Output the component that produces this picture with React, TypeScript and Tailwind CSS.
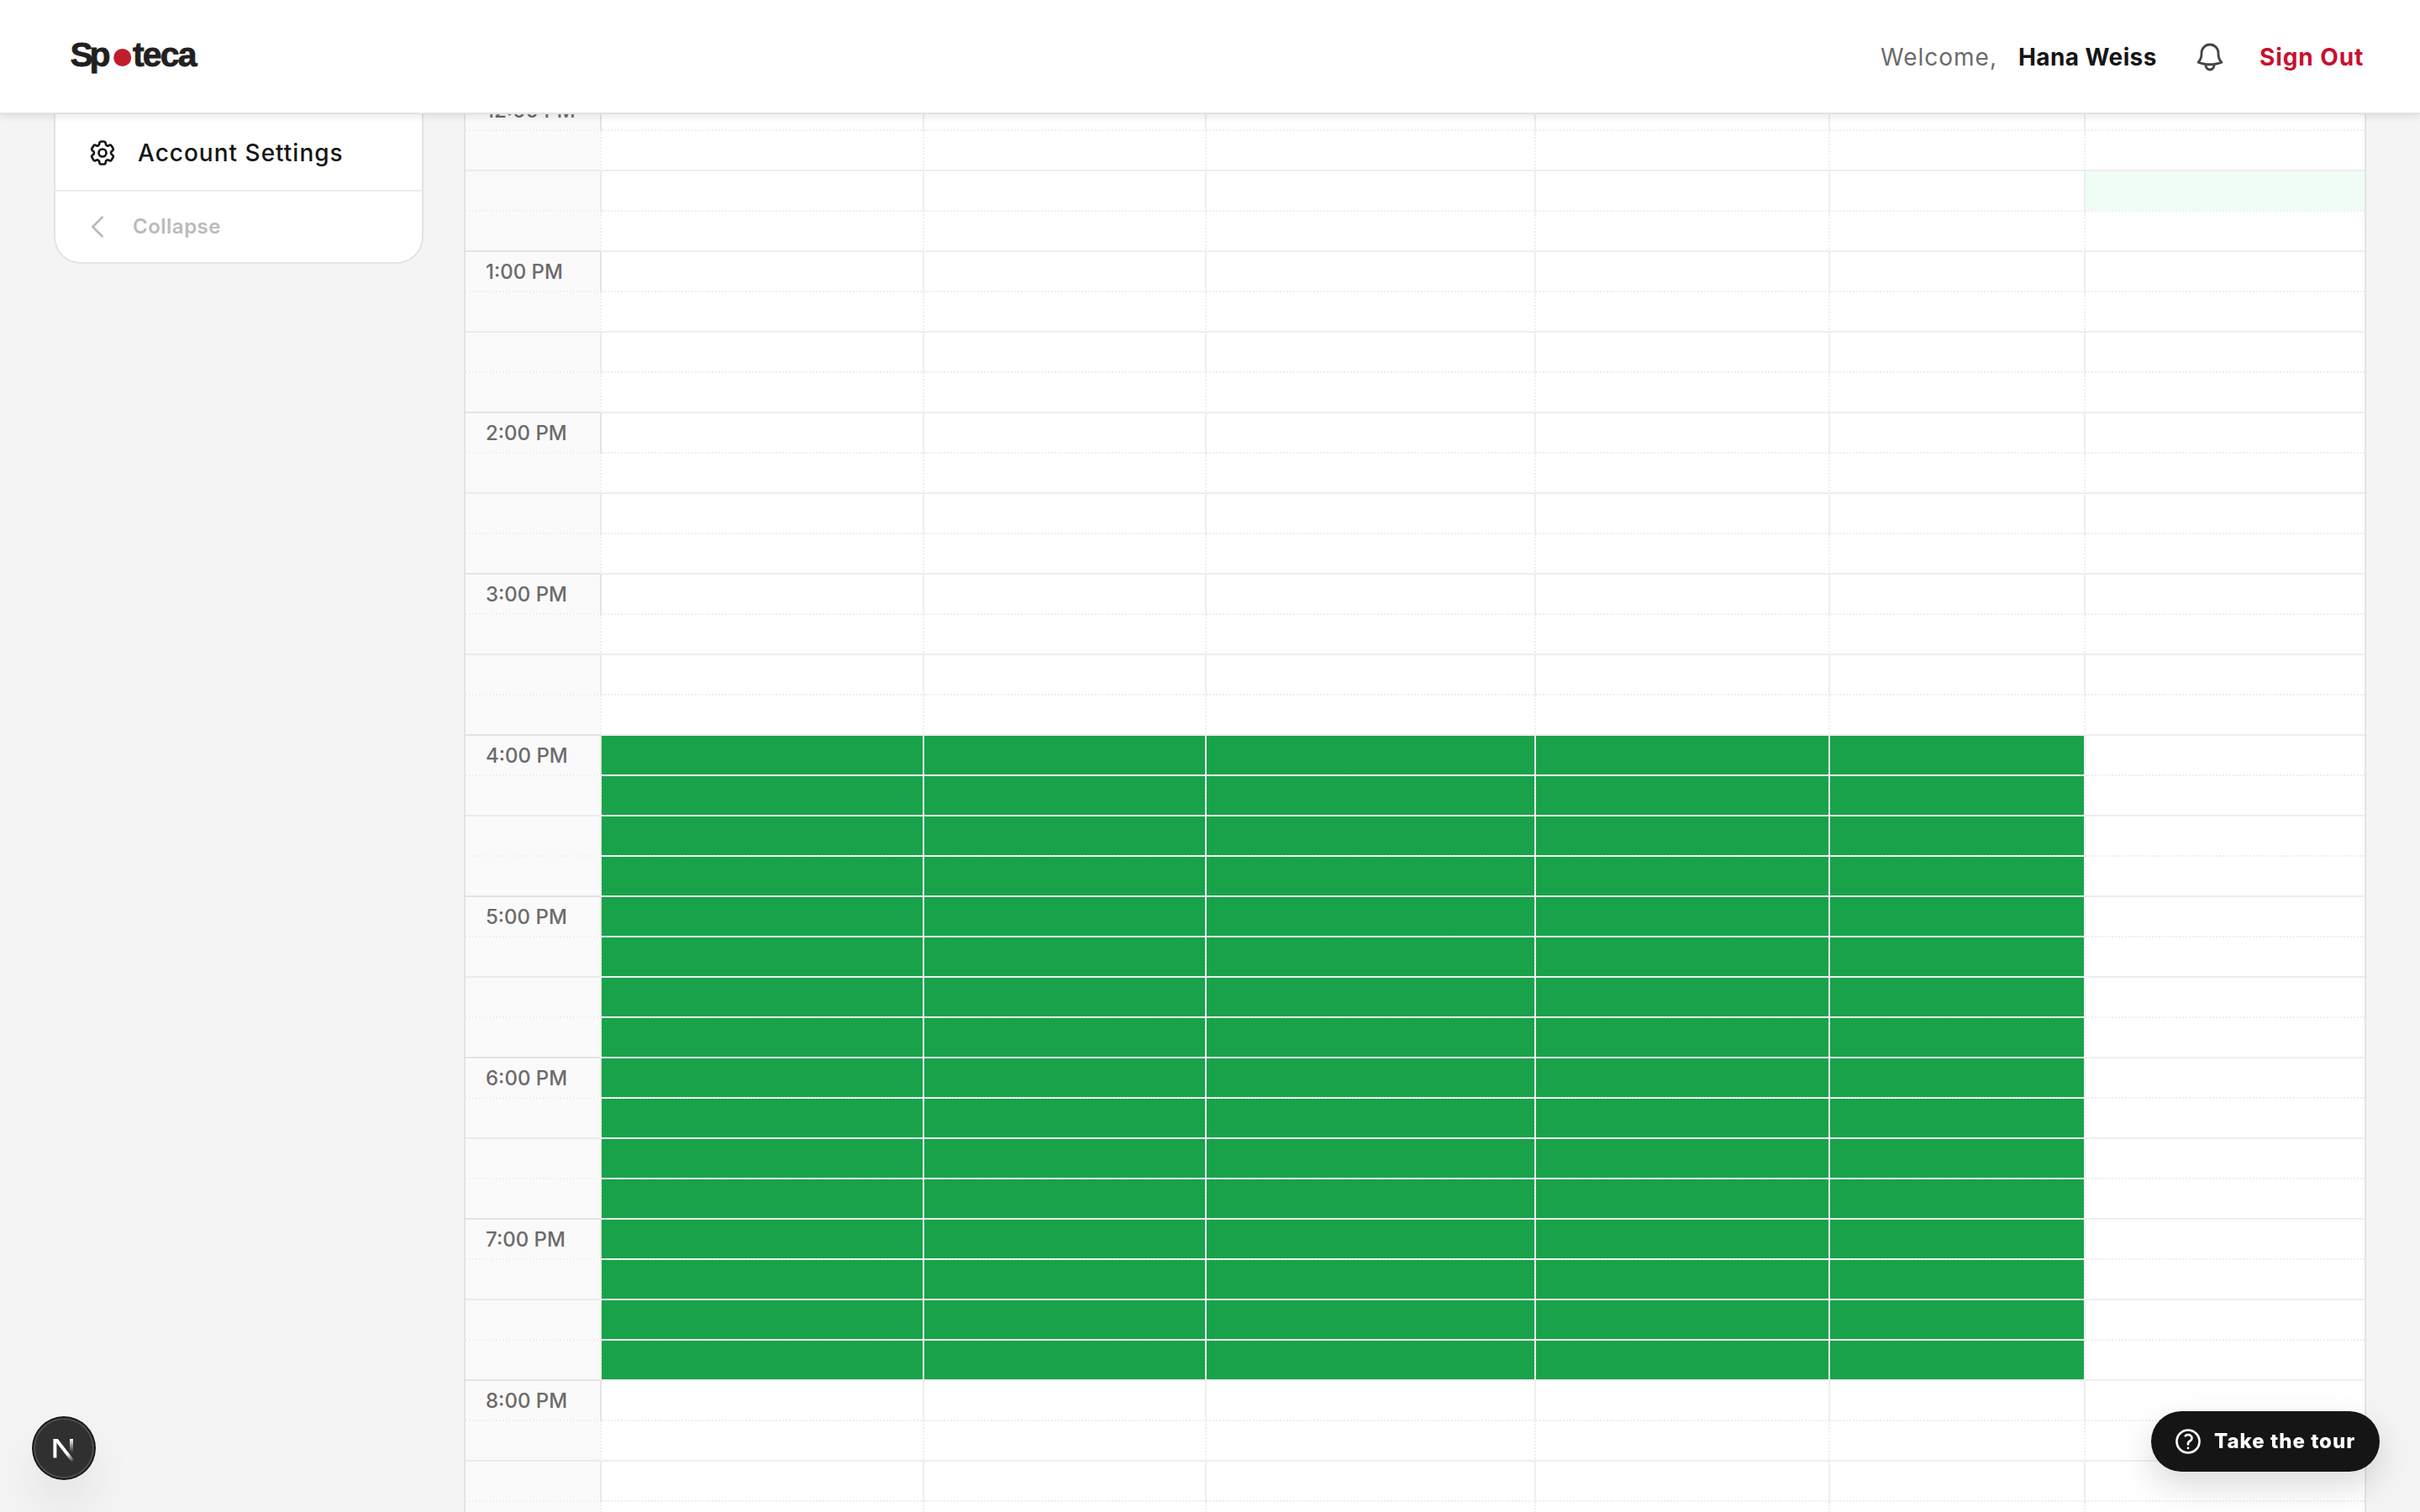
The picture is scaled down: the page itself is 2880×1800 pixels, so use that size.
import type { ReactNode } from "react";
import { HiOutlineBell, HiOutlineChevronLeft, HiOutlineCog6Tooth, HiOutlineQuestionMarkCircle } from "react-icons/hi2";

const HOURS = ["12:00 PM", "1:00 PM", "2:00 PM", "3:00 PM", "4:00 PM", "5:00 PM", "6:00 PM", "7:00 PM", "8:00 PM"];
const DAYS = [0, 1, 2, 3, 4, 5];

// quarter-hour slots, counted from noon
const SLOTS = HOURS.flatMap((hour, h) => [0, 1, 2, 3].map((q) => ({ hour, quarter: q, index: h * 4 + q })));

const isAvailable = (day: number, slot: number) => day < 5 && slot >= 16 && slot < 32;
const isHovered = (day: number, slot: number) => day === 5 && slot === 2;

function timeCellBorder(quarter: number) {
  if (quarter === 0) return "border-r-[#e3e3e3] border-b-[#eeeeee] [border-bottom-style:dotted]";
  if (quarter === 1) return "border-r-[#eeeeee] [border-right-style:dotted] border-b-[#ebebeb]";
  if (quarter === 2) return "border-r-[#ebebeb] border-b-[#eeeeee] [border-bottom-style:dotted]";
  return "border-r-[#eeeeee] [border-right-style:dotted] border-b-[#e3e3e3]";
}

function Logo() {
  return (
    <svg width="160" height="50" viewBox="0 0 160 50" aria-label="Spoteca">
      <g fill="#231f20" stroke="#231f20" strokeWidth="0.8" fontFamily="'Liberation Sans', sans-serif" fontWeight="700" fontSize="41">
        <text x="2.5" y="37" textLength="48" lengthAdjust="spacing">Sp</text>
        <text x="77" y="37" textLength="76.5" lengthAdjust="spacing">teca</text>
      </g>
      <circle cx="64.7" cy="26.5" r="10.5" fill="#be1e2d" />
    </svg>
  );
}

function Header() {
  return (
    <header className="relative z-10 flex h-[136px] shrink-0 items-center justify-between border-b-2 border-[#e3e3e3] bg-white pl-[81px] pr-16 shadow-[0_4px_8px_rgba(0,0,0,0.08)]">
      <Logo />
      <div className="flex items-center pt-[2px] whitespace-nowrap text-[28px]">
        <span className="w-[164px] tracking-[1px] text-[#6b6b6b]">Welcome,</span>
        <span className="w-[208px] font-bold tracking-[0.4px] text-[#151515]">Hana Weiss</span>
        <HiOutlineBell strokeWidth={1.7} className="mr-[39px] size-10 text-[#444444]" />
        <button className="w-[127px] text-left font-bold tracking-[0.9px] text-[#c8102e]">Sign Out</button>
      </div>
    </header>
  );
}

function SidebarItem({ icon, children }: { icon: ReactNode; children: ReactNode }) {
  return (
    <div className="flex h-[88px] items-center pl-[38px]">
      {icon}
      {children}
    </div>
  );
}

function Sidebar() {
  return (
    <aside className="h-[206px] w-[440px] shrink-0 rounded-b-[32px] border-2 border-t-0 border-[#e3e3e3] bg-white pt-[30px]">
      <SidebarItem icon={<HiOutlineCog6Tooth strokeWidth={1.8} className="mr-[24px] size-9 text-[#151515]" />}>
        <span className="whitespace-nowrap text-[28px] font-medium tracking-[1px] text-[#151515]">Account Settings</span>
      </SidebarItem>
      <div className="flex h-[86px] items-center border-t-2 border-[#eeeeee] pl-[32px] text-[#bbbbbb]">
        <HiOutlineChevronLeft strokeWidth={1.8} className="mr-[24px] size-9" />
        <span className="text-[24px] font-semibold tracking-[0.5px]">Collapse</span>
      </div>
    </aside>
  );
}

function Schedule() {
  return (
    <section className="w-[2264px] shrink-0 border-x-2 border-[#e3e3e3] bg-white">
      {SLOTS.map(({ hour, quarter, index }) => (
        <div key={index} className="grid h-12 grid-cols-[162px_384px_336px_392px_350px_304px_332px]">
          <div className={`border-r-2 border-b-2 bg-[#fafafa] bg-clip-padding pl-6 ${timeCellBorder(quarter)}`}>
            {quarter === 0 && (
              <span className="block pt-px whitespace-nowrap text-[24px] leading-[45px] font-medium text-[#6b6b6b]">{hour}</span>
            )}
          </div>
          {DAYS.map((day) => (
            <div
              key={day}
              className={[
                "border-b-2 border-[#eeeeee] bg-clip-padding",
                day < 5 ? "border-r-2" : "",
                quarter % 2 === 0 ? "[border-bottom-style:dotted]" : "[border-right-style:dotted]",
                isAvailable(day, index) ? "bg-[#18a34a]" : isHovered(day, index) ? "bg-[#f0fdf4]" : "bg-white",
              ].join(" ")}
            />
          ))}
        </div>
      ))}
    </section>
  );
}

function DevBadge() {
  return (
    <div className="fixed bottom-10 left-10 flex size-[72px] items-center justify-center rounded-full bg-[#303030] shadow-[0_0_0_2px_#171717,inset_0_0_0_2px_rgba(255,255,255,0.14),0_32px_64px_-16px_rgba(0,0,0,0.24)]">
      <svg width="40" height="40" viewBox="0 0 40 40" fill="none">
        <defs>
          <linearGradient id="diagonal" gradientUnits="userSpaceOnUse" x1="24" y1="27" x2="31" y2="36">
            <stop stopColor="#fff" />
            <stop offset="1" stopColor="#fff" stopOpacity="0" />
          </linearGradient>
          <linearGradient id="stem" gradientUnits="userSpaceOnUse" x1="28" y1="9" x2="28" y2="25">
            <stop stopColor="#fff" />
            <stop offset="1" stopColor="#fff" stopOpacity="0" />
          </linearGradient>
        </defs>
        <path d="M9.4 31.5V9" stroke="#fff" strokeWidth="4" />
        <path d="M7.4 9H12.8L32.4 34.2L29.2 36.6L11.2 13.5Z" fill="url(#diagonal)" />
        <path d="M29 9V25" stroke="url(#stem)" strokeWidth="4" />
      </svg>
    </div>
  );
}

function TourButton() {
  return (
    <button className="fixed right-12 bottom-12 flex h-[72px] w-[272px] items-center rounded-full bg-[#151515] pl-[26px] text-white shadow-[0_16px_40px_rgba(0,0,0,0.15)]">
      <HiOutlineQuestionMarkCircle strokeWidth={1.8} className="mr-[13px] size-9" />
      <span className="whitespace-nowrap text-[24px] font-extrabold tracking-[1px]">Take the tour</span>
    </button>
  );
}

export default function App() {
  return (
    <div className="flex h-[1800px] w-[2880px] flex-col overflow-hidden bg-[#f4f4f4] font-['Inter',sans-serif]">
      <Header />
      <main className="-mt-7 flex items-start gap-12 pl-16">
        <Sidebar />
        <Schedule />
      </main>
      <DevBadge />
      <TourButton />
    </div>
  );
}
